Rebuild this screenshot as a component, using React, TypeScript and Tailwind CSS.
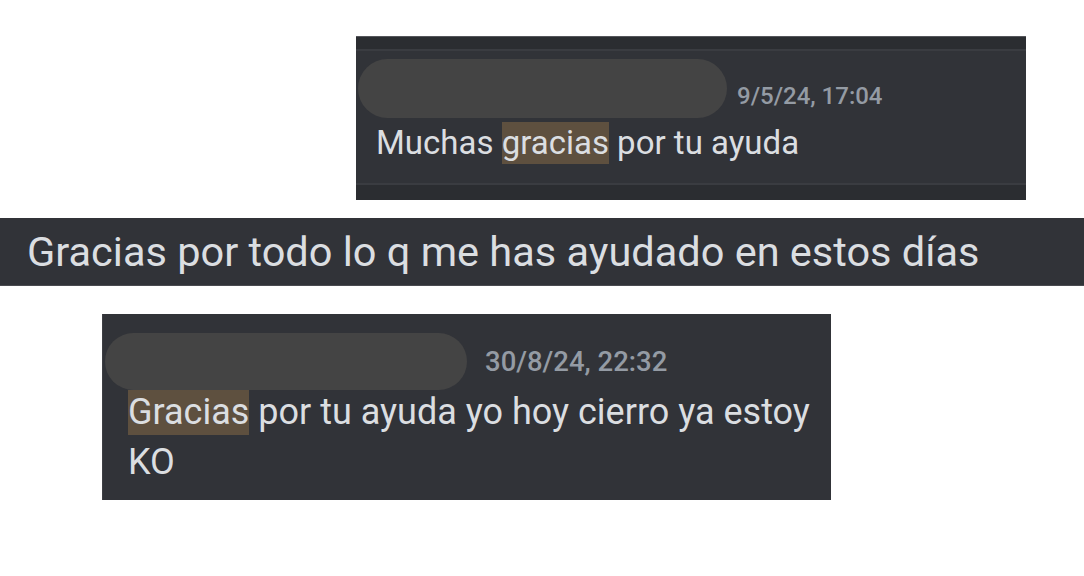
import React from "react";

const font = { fontFamily: "Roboto, 'Noto Sans', sans-serif" };

export default function App() {
  return (
    <div className="w-[1084px] h-[576px] bg-white overflow-hidden flex flex-col" style={font}>
      {/* Panel 1 */}
      <div className="mt-[36px] ml-[356px] w-[670px] h-[164px] bg-[#2b2d31] border-t border-[#55565b] flex flex-col">
        <div className="h-[12px]" />
        <div className="h-[2px] bg-[#3a3c41]" />
        <div className="h-[132px] bg-[#313338] flex flex-col pl-[2px]">
          <div className="flex items-end mt-[8px]">
            <div className="w-[369px] h-[59px] rounded-full bg-[#444444]" />
            <span className="ml-[10px] mb-[10px] text-[24px] leading-none font-medium text-[#949ba4]">9/5/24, 17:04</span>
          </div>
          <div className="ml-[18px] mt-[4px] flex items-center text-[33px] leading-[42px] text-[#dbdee1]">
            <span>Muchas&nbsp;</span>
            <span className="bg-[#5e503f]">gracias</span>
            <span>&nbsp;por tu ayuda</span>
          </div>
        </div>
        <div className="h-[2px] bg-[#3a3c41]" />
      </div>

      {/* Banner */}
      <div className="mt-[18px] w-full h-[68px] bg-[#313338] border-b border-[#4a4b50] flex items-center pl-[27px]">
        <span className="text-[41.5px] leading-none text-[#dbdee1]">Gracias por todo lo q me has ayudado en estos días</span>
      </div>

      {/* Panel 3 */}
      <div className="mt-[28px] ml-[102px] w-[729px] h-[186px] bg-[#313338] flex flex-col border-l border-[#3e3f44]">
        <div className="flex items-end mt-[19px] pl-[2px]">
          <div className="w-[362px] h-[57px] rounded-full bg-[#444444]" />
          <span className="ml-[18px] mb-[15px] text-[27.5px] leading-none font-medium text-[#949ba4]">30/8/24, 22:32</span>
        </div>
        <div className="ml-[25px] text-[36px] leading-[50px] text-[#dbdee1] -mt-[3px]">
          <span className="bg-[#5e503f] inline-block leading-[45px]">Gracias</span> por tu ayuda yo hoy cierro ya estoy
          <br />KO
        </div>
      </div>
    </div>
  );
}
